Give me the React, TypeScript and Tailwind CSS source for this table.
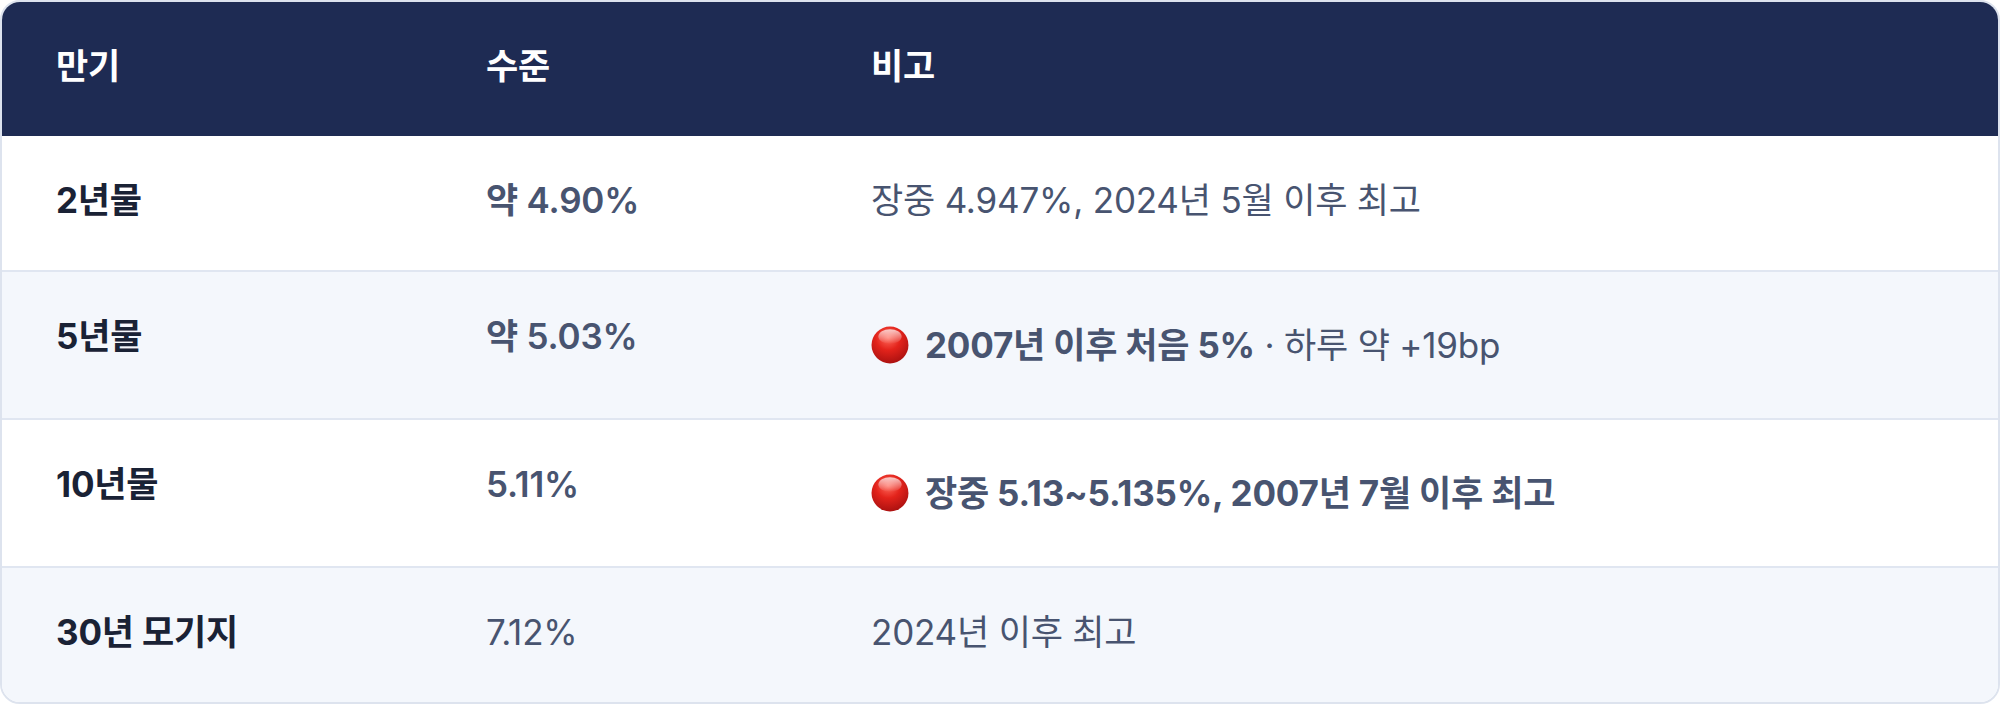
import React from "react";

type Row = {
  term: string;
  level: string;
  levelBold: boolean;
  note: React.ReactNode;
  alert?: boolean;
  shaded?: boolean;
};

function RedDot() {
  return (
    <svg width="38" height="38" viewBox="0 0 36 36" className="shrink-0">
      <defs>
        <radialGradient id="dotFill" cx="45%" cy="30%" r="75%">
          <stop offset="0%" stopColor="#ff6a5c" />
          <stop offset="45%" stopColor="#e3231b" />
          <stop offset="100%" stopColor="#a50f0f" />
        </radialGradient>
        <linearGradient id="dotShine" x1="0" y1="0" x2="0" y2="1">
          <stop offset="0%" stopColor="#ffffff" stopOpacity="0.75" />
          <stop offset="100%" stopColor="#ffffff" stopOpacity="0" />
        </linearGradient>
      </defs>
      <circle cx="18" cy="18" r="17.5" fill="url(#dotFill)" />
      <ellipse cx="18" cy="10" rx="11" ry="7" fill="url(#dotShine)" />
    </svg>
  );
}

const rows: Row[] = [
  {
    term: "2년물",
    level: "약 4.90%",
    levelBold: true,
    note: <span>장중 4.947%, 2024년 5월 이후 최고</span>,
  },
  {
    term: "5년물",
    level: "약 5.03%",
    levelBold: true,
    alert: true,
    shaded: true,
    note: (
      <span>
        <span className="font-bold">2007년 이후 처음 5%</span> · 하루 약 +19bp
      </span>
    ),
  },
  {
    term: "10년물",
    level: "5.11%",
    levelBold: true,
    alert: true,
    note: <span className="font-bold">장중 5.13~5.135%, 2007년 7월 이후 최고</span>,
  },
  {
    term: "30년 모기지",
    level: "7.12%",
    levelBold: false,
    shaded: true,
    note: <span>2024년 이후 최고</span>,
  },
];

export default function App() {
  return (
    <div
      className="w-[2000px] h-[704px] bg-white text-[35px] tracking-[-0.2px]"
      style={{ fontFamily: 'Inter, "Noto Sans CJK KR", sans-serif' }}
    >
      <div className="h-full border-2 border-[#dde3ee] rounded-[20px] overflow-hidden flex flex-col">
        {/* header */}
        <div className="grid grid-cols-[430px_385px_1fr] bg-[#1e2b53] text-white font-bold">
          <div className="px-[54px] pt-[42px] pb-[48px] leading-[44px]">만기</div>
          <div className="px-[54px] pt-[42px] pb-[48px] leading-[44px]">수준</div>
          <div className="px-[54px] pt-[42px] pb-[48px] leading-[44px]">비고</div>
        </div>

        {rows.map((r, i) => (
          <div
            key={r.term}
            className={`grid grid-cols-[430px_385px_1fr] items-start ${
              i > 0 ? "border-t-2 border-[#e0e6f1]" : ""
            } ${r.shaded ? "bg-[#f4f7fc]" : "bg-white"}`}
          >
            <div className="px-[54px] pt-[42px] pb-[48px] leading-[44px] font-bold text-[#1a2235]">
              {r.term}
            </div>
            <div
              className={`px-[54px] pt-[42px] pb-[48px] leading-[44px] text-[#485470] ${
                r.levelBold ? "font-semibold" : "font-normal"
              }`}
            >
              {r.level}
            </div>
            {r.alert ? (
              <div className="px-[54px] py-[45px] text-[#485470]">
                <div className="h-[56px] flex items-center gap-[16px]">
                  <RedDot />
                  {r.note}
                </div>
              </div>
            ) : (
              <div className="px-[54px] pt-[42px] pb-[48px] leading-[44px] text-[#485470]">
                {r.note}
              </div>
            )}
          </div>
        ))}
      </div>
    </div>
  );
}
